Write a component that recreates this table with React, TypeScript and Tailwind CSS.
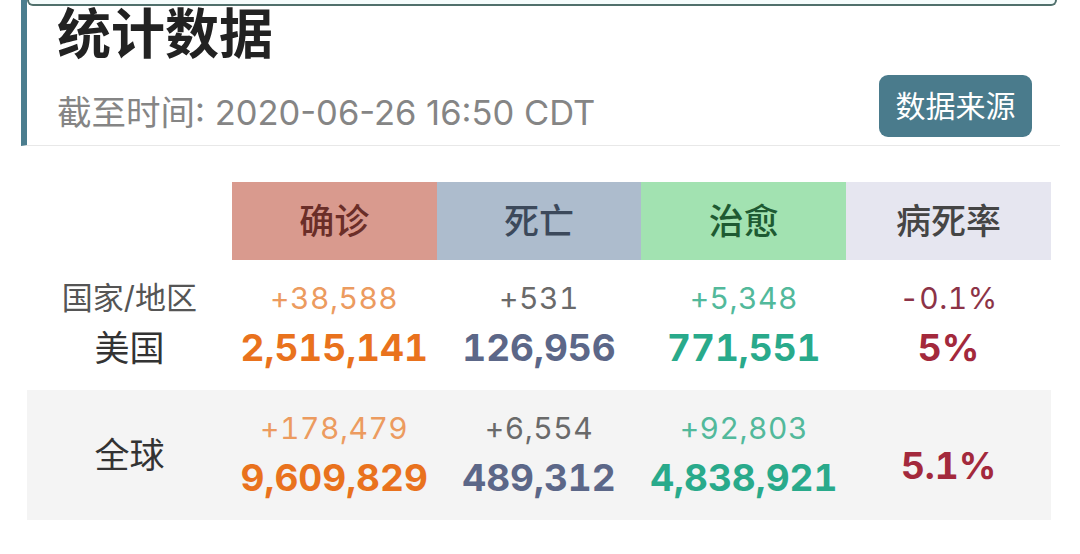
import React from 'react'

const cjk = "font-['Inter','Noto_Sans_CJK_SC',sans-serif]"

const columns = [
  { label: '确诊', cell: 'bg-[#d99a8e] text-[#6a2e28]' },
  { label: '死亡', cell: 'bg-[#adbccd] text-[#3c495b]' },
  { label: '治愈', cell: 'bg-[#a2e2b1] text-[#1e5a32]' },
  { label: '病死率', cell: 'bg-[#e6e6f0] text-[#454545]' },
]

type Stat = { diff?: string; total: string; diffColor: string; totalColor: string }

const rows: { name: string; sub?: string; shaded: boolean; stats: Stat[] }[] = [
  {
    name: '美国',
    sub: '国家/地区',
    shaded: false,
    stats: [
      { diff: '+38,588', total: '2,515,141', diffColor: 'text-[#ec9b5f]', totalColor: 'text-[#e9721d]' },
      { diff: '+531', total: '126,956', diffColor: 'text-[#6a6a6a]', totalColor: 'text-[#5c6788]' },
      { diff: '+5,348', total: '771,551', diffColor: 'text-[#52b99b]', totalColor: 'text-[#29aa8b]' },
      { diff: '-0.1%', total: '5%', diffColor: 'text-[#8c3347]', totalColor: 'text-[#a3293c]' },
    ],
  },
  {
    name: '全球',
    shaded: true,
    stats: [
      { diff: '+178,479', total: '9,609,829', diffColor: 'text-[#ec9b5f]', totalColor: 'text-[#e9721d]' },
      { diff: '+6,554', total: '489,312', diffColor: 'text-[#6a6a6a]', totalColor: 'text-[#5c6788]' },
      { diff: '+92,803', total: '4,838,921', diffColor: 'text-[#52b99b]', totalColor: 'text-[#29aa8b]' },
      { total: '5.1%', diffColor: '', totalColor: 'text-[#a3293c]' },
    ],
  },
]

export default function App() {
  return (
    <div className={`h-[554px] w-[1080px] overflow-hidden bg-white ${cjk}`}>
      <div className="ml-[21px] w-[1039px] border-b border-l-[6px] border-b-[#e8e8e8] border-l-[#4b7d8e]">
        <div className="mr-[3px] h-[6px] rounded-b-[10px] border-2 border-t-0 border-[#50706c] bg-[#f5fcfc]" />
        <h1 className="mt-[2px] pl-[30px] text-[54px] font-bold leading-[54px] text-[#222]">统计数据</h1>
        <div className="mt-[13px] flex items-end justify-between pb-[8px] pl-[30px] pr-[28px]">
          <p className="pb-[4px] text-[34.5px] leading-[40px] text-[#858585]">截至时间: 2020-06-26 16:50 CDT</p>
          <button className="flex h-[62px] w-[153px] items-center justify-center rounded-[9px] bg-[#4a7b8c] text-[30px] text-white">
            数据来源
          </button>
        </div>
      </div>

      <div className="ml-[27px] mt-[36px] w-[1024px]">
        <div className="grid h-[78px] grid-cols-5">
          <div />
          {columns.map((c) => (
            <div key={c.label} className={`flex items-center justify-center text-[35px] font-medium ${c.cell}`}>
              {c.label}
            </div>
          ))}
        </div>

        {rows.map((row) => (
          <div key={row.name} className={`grid h-[130px] grid-cols-5 items-center ${row.shaded ? 'bg-[#f4f4f4]' : ''}`}>
            <div className="flex flex-col items-center">
              {row.sub ? (
                <>
                  <span className="text-[31px] leading-[40px] text-[#555]">{row.sub}</span>
                  <span className="mt-[6px] text-[35px] leading-[48px] text-[#333]">{row.name}</span>
                </>
              ) : (
                <span className="text-[35px] leading-[48px] text-[#333]">{row.name}</span>
              )}
            </div>
            {row.stats.map((s, i) => (
              <div key={i} className="flex flex-col items-center tabular-nums">
                {s.diff ? (
                  <>
                    <span className={`text-[30px] leading-[40px] tracking-[0.5px] ${s.diffColor}`}>{s.diff}</span>
                    <span className={`mt-[6px] text-[37px] font-bold leading-[48px] ${s.totalColor}`}>{s.total}</span>
                  </>
                ) : (
                  <span className={`mt-[22px] text-[37px] font-bold leading-[48px] ${s.totalColor}`}>{s.total}</span>
                )}
              </div>
            ))}
          </div>
        ))}
      </div>
    </div>
  )
}
